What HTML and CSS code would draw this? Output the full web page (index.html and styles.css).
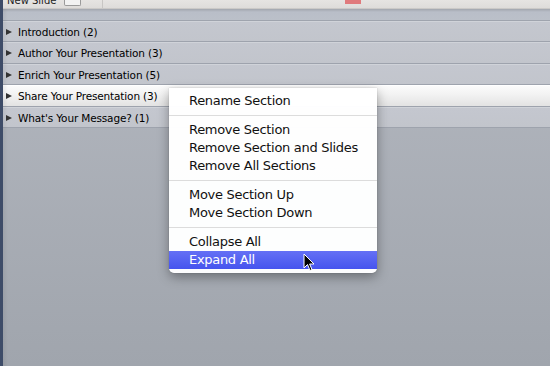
FILE: index.html
```html
<!DOCTYPE html>
<html>
<head>
<meta charset="utf-8">
<link rel="stylesheet" href="styles.css">
</head>
<body>
<div class="app">
  <div class="edge"></div>
  <div class="pane">
    <div class="toolbar">
      <span class="tb-label">New Slide</span>
      <span class="tb-btn"></span>
      <span class="tb-sep"></span>
      <span class="tb-red"></span>
    </div>
    <div class="band"></div>
    <div class="sections">
      <div class="row"><span class="tri"></span>Introduction (2)</div>
      <div class="row"><span class="tri"></span>Author Your Presentation (3)</div>
      <div class="row"><span class="tri"></span>Enrich Your Presentation (5)</div>
      <div class="row selected"><span class="tri"></span>Share Your Presentation (3)</div>
      <div class="row"><span class="tri"></span>What's Your Message? (1)</div>
    </div>
  </div>
</div>

<div class="menu">
  <div class="item">Rename Section</div>
  <div class="sep"></div>
  <div class="item">Remove Section</div>
  <div class="item">Remove Section and Slides</div>
  <div class="item">Remove All Sections</div>
  <div class="sep"></div>
  <div class="item">Move Section Up</div>
  <div class="item">Move Section Down</div>
  <div class="sep"></div>
  <div class="item">Collapse All</div>
  <div class="item hl">Expand All</div>
</div>

<svg class="cursor" width="12" height="19" viewBox="0 0 12 19">
  <path d="M1 1 L1 15 L4.5 11.5 L7 17.5 L9 16.6 L6.6 11 L11 11 Z" fill="#000" stroke="#fff" stroke-width="1" stroke-linejoin="round"/>
</svg>
</body>
</html>
```
FILE: styles.css
```css
html, body {
  margin: 0;
  padding: 0;
}
body {
  width: 550px;
  height: 366px;
  overflow: hidden;
  position: relative;
  font-family: "DejaVu Sans", "Liberation Sans", sans-serif;
  background: #a8adb5;
}
.app {
  display: flex;
  height: 366px;
}
.edge {
  width: 3px;
  background: #3e4c68;
  flex: none;
}
.pane {
  flex: 1;
  display: flex;
  flex-direction: column;
  background: linear-gradient(#b4b8c0, #a0a5ad);
  position: relative;
}
.pane::before {
  content: "";
  position: absolute;
  left: 0;
  top: 0;
  bottom: 0;
  width: 5px;
  background: linear-gradient(90deg, rgba(0,0,0,0.06), rgba(0,0,0,0));
}
.toolbar {
  height: 8px;
  background: linear-gradient(#e6e4e2, #dedcda);
  border-bottom: 1px solid #cbc9c7;
  overflow: hidden;
  display: flex;
  align-items: flex-start;
  position: relative;
}
.tb-label {
  font-size: 10px;
  color: #222;
  margin-left: 4px;
  line-height: 10px;
  margin-top: -4px;
}
.tb-btn {
  width: 15px;
  height: 5px;
  border: 1px solid #9a9a9a;
  border-top: none;
  border-radius: 0 0 2px 2px;
  background: #f2f2f2;
  margin-left: 8px;
}
.tb-sep {
  width: 1px;
  height: 8px;
  background: #c8c6c4;
  margin-left: 21px;
}
.tb-red {
  width: 16px;
  height: 4px;
  background: #e07a7c;
  margin-left: 242px;
}
.band {
  height: 11px;
  background: linear-gradient(#a2a6ae, #b9bec8 3px, #bbc0c9);
  border-bottom: 1px solid #9fa4ae;
}
.sections {
  display: flex;
  flex-direction: column;
}
.row {
  height: 21px;
  box-sizing: border-box;
  display: flex;
  align-items: center;
  font-size: 10.5px;
  letter-spacing: -0.15px;
  color: #000;
  padding-left: 3px;
  background: linear-gradient(#c4c7cf, #c2c5cc);
  border-top: 1px solid #d0d3d9;
  border-bottom: 1px solid #9ea3ad;
}
.row:nth-child(2), .row:nth-child(4) {
  height: 22px;
}
.row.selected {
  background: linear-gradient(#fbfbfb, #f3f3f3 40%, #e3e3e3);
  border-top-color: #ffffff;
}
.tri {
  width: 0;
  height: 0;
  border-left: 6px solid #333;
  border-top: 3.5px solid transparent;
  border-bottom: 3.5px solid transparent;
  margin-right: 6px;
}
.menu {
  position: absolute;
  left: 169px;
  top: 88px;
  width: 208px;
  padding: 4px 0 4px;
  background: rgba(255, 255, 255, 0.98);
  border-radius: 0 0 5px 5px;
  box-shadow: 0 4px 12px rgba(0, 0, 0, 0.35), 0 0 1px rgba(0, 0, 0, 0.4);
}
.item {
  height: 18px;
  line-height: 18px;
  font-size: 13px;
  letter-spacing: -0.3px;
  padding-left: 20px;
  color: #111;
}
.item.hl {
  color: #fff;
  background: linear-gradient(#6470f5, #4654ee);
}
.sep {
  height: 1px;
  background: #dcdcdc;
  margin: 5px 0 5px;
}
.cursor {
  position: absolute;
  left: 303px;
  top: 253px;
}
```
